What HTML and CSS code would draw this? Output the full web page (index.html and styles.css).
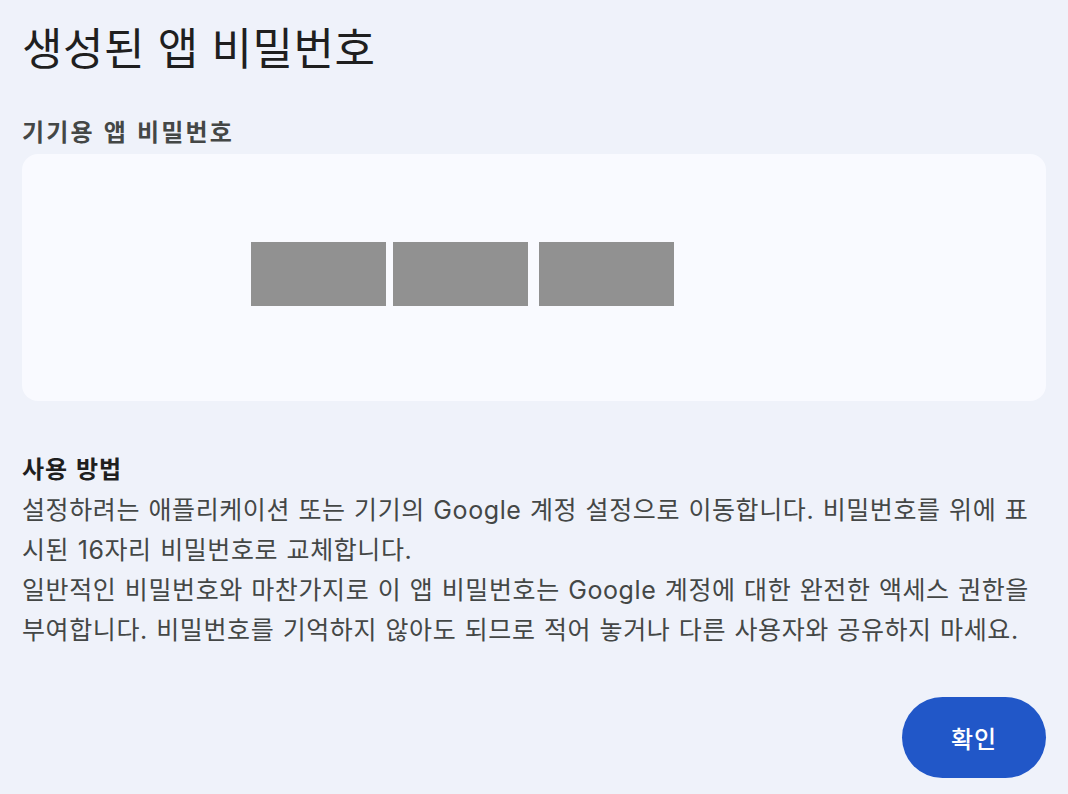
FILE: index.html
```html
<!DOCTYPE html>
<html lang="ko">
<head>
<meta charset="utf-8">
<link rel="stylesheet" href="styles.css">
</head>
<body>
<div class="page">
  <h1 class="title">생성된 앱 비밀번호</h1>
  <h2 class="label">기기용 앱 비밀번호</h2>
  <div class="card">
    <div class="code">
      <span class="mask"></span>
      <span class="mask"></span>
      <span class="mask mask-last"></span>
    </div>
  </div>
  <h3 class="how">사용 방법</h3>
  <div class="desc">
    <p class="body">설정하려는 애플리케이션 또는 기기의 Google 계정 설정으로 이동합니다. 비밀번호를 위에 표시된 16자리 비밀번호로 교체합니다.</p>
    <p class="body">일반적인 비밀번호와 마찬가지로 이 앱 비밀번호는 Google 계정에 대한 완전한 액세스 권한을 부여합니다. 비밀번호를 기억하지 않아도 되므로 적어 놓거나 다른 사용자와 공유하지 마세요.</p>
  </div>
  <div class="actions">
    <button class="ok">확인</button>
  </div>
</div>
</body>
</html>
```

FILE: styles.css
```css
html, body {
  margin: 0;
  padding: 0;
  background: #eff2fa;
}
body {
  font-family: Inter, "Noto Sans CJK KR", "Noto Sans", sans-serif;
  color: #1f1f1f;
  width: 1068px;
  height: 794px;
  overflow: hidden;
}
.page {
  padding: 14px 22px 0 22px;
  display: flex;
  flex-direction: column;
}
.title {
  margin: 0;
  font-family: "Noto Sans CJK KR", sans-serif;
  font-size: 44px;
  font-weight: 400;
  line-height: 64px;
  letter-spacing: 0.5px;
  color: #1f1f1f;
}
.label {
  margin: 37px 0 0 0;
  font-family: "Noto Sans CJK KR", sans-serif;
  font-size: 24px;
  font-weight: 700;
  line-height: 32px;
  letter-spacing: 2.2px;
  color: #444746;
}
.card {
  margin-top: 7px;
  height: 247px;
  box-sizing: border-box;
  padding-top: 88px;
  background: #f9faff;
  border-radius: 16px;
  display: flex;
  align-items: flex-start;
}
.code {
  display: flex;
  margin-left: 229px;
  gap: 7px;
}
.mask {
  display: block;
  width: 135px;
  height: 64px;
  background: #919191;
}
.mask-last {
  margin-left: 4px;
}
.how {
  margin: 51px 0 0 0;
  font-family: "Noto Sans CJK KR", sans-serif;
  font-size: 24px;
  font-weight: 700;
  line-height: 32px;
  letter-spacing: 1px;
  color: #1f1f1f;
}
.desc {
  margin-top: 6px;
  display: flex;
  flex-direction: column;
}
.body {
  margin: 0;
  font-size: 25px;
  line-height: 40px;
  letter-spacing: 0.6px;
  word-spacing: 0.8px;
  color: #444746;
  font-weight: 400;
}
.actions {
  display: flex;
  justify-content: flex-end;
  margin-top: 47px;
}
.ok {
  width: 144px;
  height: 81px;
  border: none;
  border-radius: 41px;
  background: #2157c8;
  color: #ffffff;
  font-family: "Noto Sans CJK KR", sans-serif;
  font-size: 24px;
  font-weight: 500;
  letter-spacing: 1px;
  padding: 0;
}
```
